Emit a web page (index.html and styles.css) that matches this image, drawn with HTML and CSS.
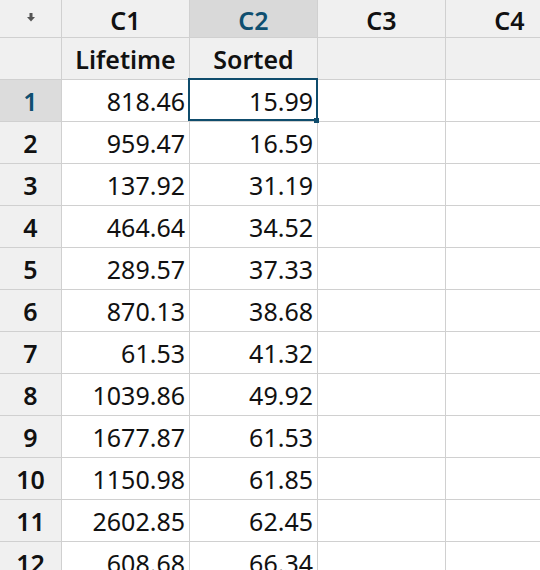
FILE: index.html
```html
<!DOCTYPE html>
<html>
<head>
<meta charset="utf-8">
<link rel="stylesheet" href="styles.css">
</head>
<body>
<div class="frame">
<div class="sheet">
  <div class="cell hdr corner"><svg class="arrow" width="8" height="9" viewBox="0 0 8 9"><rect x="2.5" y="0" width="3" height="4" fill="#555"/><path d="M0 4 H8 L4 8.5 Z" fill="#555"/></svg></div>
  <div class="cell hdr col">C1</div>
  <div class="cell hdr col active">C2</div>
  <div class="cell hdr col">C3</div>
  <div class="cell hdr col">C4</div>

  <div class="cell hdr name"></div>
  <div class="cell hdr name">Lifetime</div>
  <div class="cell hdr name">Sorted</div>
  <div class="cell hdr name"></div>
  <div class="cell hdr name"></div>

  <div class="cell rown active">1</div><div class="cell num">818.46</div><div class="cell num sel">15.99</div><div class="cell"></div><div class="cell"></div>
  <div class="cell rown">2</div><div class="cell num">959.47</div><div class="cell num">16.59</div><div class="cell"></div><div class="cell"></div>
  <div class="cell rown">3</div><div class="cell num">137.92</div><div class="cell num">31.19</div><div class="cell"></div><div class="cell"></div>
  <div class="cell rown">4</div><div class="cell num">464.64</div><div class="cell num">34.52</div><div class="cell"></div><div class="cell"></div>
  <div class="cell rown">5</div><div class="cell num">289.57</div><div class="cell num">37.33</div><div class="cell"></div><div class="cell"></div>
  <div class="cell rown">6</div><div class="cell num">870.13</div><div class="cell num">38.68</div><div class="cell"></div><div class="cell"></div>
  <div class="cell rown">7</div><div class="cell num">61.53</div><div class="cell num">41.32</div><div class="cell"></div><div class="cell"></div>
  <div class="cell rown">8</div><div class="cell num">1039.86</div><div class="cell num">49.92</div><div class="cell"></div><div class="cell"></div>
  <div class="cell rown">9</div><div class="cell num">1677.87</div><div class="cell num">61.53</div><div class="cell"></div><div class="cell"></div>
  <div class="cell rown">10</div><div class="cell num">1150.98</div><div class="cell num">61.85</div><div class="cell"></div><div class="cell"></div>
  <div class="cell rown">11</div><div class="cell num">2602.85</div><div class="cell num">62.45</div><div class="cell"></div><div class="cell"></div>
  <div class="cell rown">12</div><div class="cell num">608.68</div><div class="cell num">66.34</div><div class="cell"></div><div class="cell"></div>
</div>
</div>
</body>
</html>
```
FILE: styles.css
```css
html, body {
  margin: 0;
  padding: 0;
  background: #fff;
}
.frame {
  width: 540px;
  height: 570px;
  overflow: hidden;
}
.sheet {
  display: grid;
  grid-template-columns: 62px 128px 128px 128px 128px;
  grid-template-rows: 38px 42px;
  grid-auto-rows: 42px;
  font-family: "Noto Sans", "Open Sans", sans-serif;
  font-size: 25px;
  color: #111;
  width: 574px;
}
.cell {
  box-sizing: border-box;
  border-right: 1px solid #d0d0d0;
  border-bottom: 1px solid #d0d0d0;
  display: flex;
  align-items: center;
  position: relative;
  white-space: nowrap;
}
.hdr {
  background: #f0f0f0;
  justify-content: center;
  font-weight: 600;
}
.hdr.col {
  padding-top: 2px;
}
.hdr.active {
  background: #d9d9d9;
  color: #0f4f70;
}
.corner .arrow {
  margin-top: -3px;
  margin-left: 1px;
}
.rown {
  background: #f0f0f0;
  justify-content: center;
  font-weight: 600;
}
.rown.active {
  background: #dcdcdc;
  color: #0f4f70;
}
.num {
  justify-content: flex-end;
  padding-right: 4px;
}
.sel::after {
  content: "";
  position: absolute;
  left: -2px;
  top: -2px;
  right: -1px;
  bottom: 0;
  border: 2px solid #0f4c6c;
}
.sel::before {
  content: "";
  position: absolute;
  width: 5px;
  height: 5px;
  right: -2px;
  bottom: -2px;
  background: #0f4c6c;
  z-index: 2;
}
```
